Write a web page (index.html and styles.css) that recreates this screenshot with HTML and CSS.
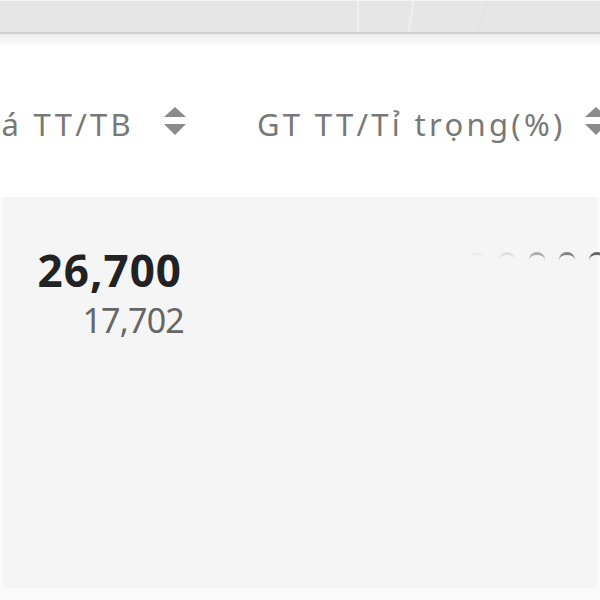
FILE: index.html
```html
<!DOCTYPE html>
<html>
<head>
<meta charset="utf-8">
<link rel="stylesheet" href="styles.css">
</head>
<body>
<div class="frame">
  <div class="topbar">
    <span class="glint g1"></span>
    <span class="glint g2"></span>
    <span class="glint g3"></span>
  </div>
  <div class="shadow"></div>
  <div class="head">
    <div class="col c1">
      <span class="label">Giá TT/TB</span>
      <svg class="sort" width="22" height="30" viewBox="0 0 22 30"><path d="M11 0 L22 10 L0 10 Z" fill="#8a8a8a"/><path d="M0 17 L22 17 L11 28 Z" fill="#8a8a8a"/></svg>
    </div>
    <div class="col c2">
      <span class="label">GT TT/Tỉ trọng(%)</span>
      <svg class="sort" width="22" height="30" viewBox="0 0 22 30"><path d="M11 0 L22 10 L0 10 Z" fill="#8a8a8a"/><path d="M0 17 L22 17 L11 28 Z" fill="#8a8a8a"/></svg>
    </div>
  </div>
  <div class="body">
    <div class="row">
      <div class="pricecell">
        <div class="big">26,700</div>
        <div class="small">17,702</div>
      </div>
      <div class="loader">
        <span class="arc a1"></span>
        <span class="arc a2"></span>
        <span class="arc a3"></span>
        <span class="arc a4"></span>
        <span class="arc a5"></span>
      </div>
    </div>
  </div>
</div>
</body>
</html>
```
FILE: styles.css
```css
html, body {
  margin: 0;
  padding: 0;
  background: #ffffff;
  font-family: "Noto Sans", "DejaVu Sans", sans-serif;
}
.frame {
  width: 600px;
  height: 600px;
  overflow: hidden;
  display: flex;
  flex-direction: column;
}
.topbar {
  height: 34px;
  background: #e6e6e6;
  border-top: 1px solid #f4f4f4;
  border-bottom: 2px solid #d0d0d0;
  box-sizing: border-box;
  position: relative;
  flex: none;
}
.glint {
  position: absolute;
  top: 0;
  bottom: 0;
  width: 2px;
  background: #eef0f0;
}
.g1 { left: 357px; }
.g2 { left: 410px; transform: skewX(-8deg); }
.g3 { left: 482px; transform: skewX(-18deg); background: #e0e4e4; }
.shadow {
  height: 12px;
  background: linear-gradient(#ededed, #ffffff);
  flex: none;
}
.head {
  height: 151px;
  display: flex;
  align-items: center;
  flex: none;
  box-sizing: border-box;
}
.col {
  display: flex;
  align-items: center;
  flex: none;
  white-space: nowrap;
}
.c1 {
  width: 186px;
  justify-content: flex-end;
  overflow: hidden;
  gap: 30px;
}
.c2 {
  margin-left: 71px;
  gap: 19px;
}
.label {
  font-size: 31px;
  color: #787878;
  letter-spacing: 3.3px;
  position: relative;
  top: 2px;
}
.sort { flex: none; }
.body {
  flex: 1;
  background: #f5f5f5;
  border-left: 3px solid #fafafa;
  border-right: 3px solid #fafafa;
  border-bottom: 12px solid #fafafa;
}
.row {
  display: flex;
  padding-top: 45px;
}
.pricecell {
  width: 181px;
  display: flex;
  flex-direction: column;
  align-items: flex-end;
}
.big {
  font-size: 44px;
  font-weight: 700;
  color: #222222;
  line-height: 56px;
  letter-spacing: 1px;
  margin-right: 2px;
}
.small {
  font-size: 34px;
  color: #666666;
  line-height: 34px;
  letter-spacing: -0.8px;
  margin-top: 5px;
}
.loader {
  margin-left: auto;
  display: flex;
  gap: 14px;
  padding-top: 10px;
  margin-right: -8px;
}
.arc {
  width: 16px;
  height: 16px;
  border-radius: 50%;
  border-top: 3px solid #666;
  box-sizing: border-box;
}
.a1 { opacity: 0.04; }
.a2 { opacity: 0.15; }
.a3 { opacity: 0.5; }
.a4 { opacity: 0.8; }
.a5 { opacity: 1; }
```
